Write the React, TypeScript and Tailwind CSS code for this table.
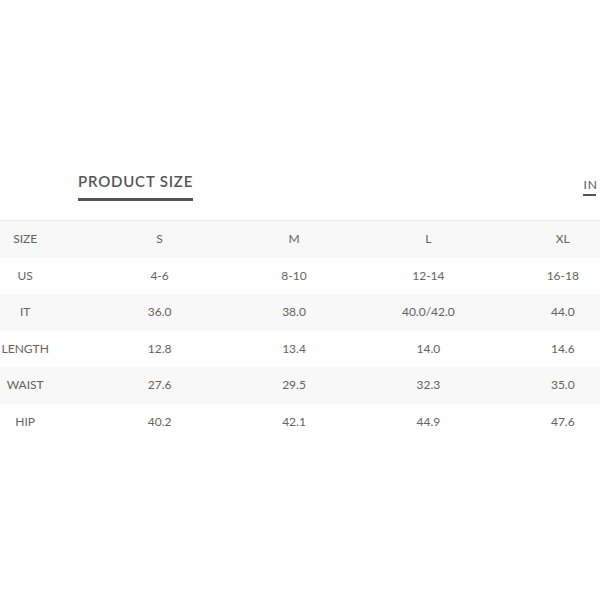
const sizes = ["S", "M", "L", "XL"];

const rows: { label: string; values: string[] }[] = [
  { label: "US", values: ["4-6", "8-10", "12-14", "16-18"] },
  { label: "IT", values: ["36.0", "38.0", "40.0/42.0", "44.0"] },
  { label: "LENGTH", values: ["12.8", "13.4", "14.0", "14.6"] },
  { label: "WAIST", values: ["27.6", "29.5", "32.3", "35.0"] },
  { label: "HIP", values: ["40.2", "42.1", "44.9", "47.6"] },
];

function Row({ cells, shaded }: { cells: string[]; shaded: boolean }) {
  return (
    <div
      className={`grid h-[36.5px] grid-cols-5 items-center text-center text-[12px] text-[#636363] ${
        shaded ? "bg-[#f8f8f8]" : "bg-white"
      }`}
    >
      {cells.map((c, i) => (
        <div key={i}>{c}</div>
      ))}
    </div>
  );
}

export default function App() {
  return (
    <div
      className="relative h-[600px] w-[600px] overflow-hidden bg-white"
      style={{ fontFamily: "Lato, 'Noto Sans', sans-serif" }}
    >
      <div className="flex items-start justify-between pt-[171px]">
        <div className="ml-[78px]">
          <h2 className="text-[15px] font-semibold leading-[20px] tracking-[0.8px] text-[#555]">
            PRODUCT SIZE
          </h2>
          <div className="mt-[7px] h-[3px] w-[115px] bg-[#555]" />
        </div>
        <div className="mr-[2px] mt-[7px]">
          <span className="block text-[12px] leading-[14px] tracking-[1px] text-[#555]">IN</span>
          <div className="mt-[2px] h-[1.5px] w-[13px] bg-[#555]" />
        </div>
      </div>

      <div className="mt-[19px] ml-[-42px] w-[672px] border-t border-[#ececec]">
        <Row cells={["SIZE", ...sizes]} shaded />
        {rows.map((r, i) => (
          <Row key={r.label} cells={[r.label, ...r.values]} shaded={i % 2 === 1} />
        ))}
      </div>
    </div>
  );
}
